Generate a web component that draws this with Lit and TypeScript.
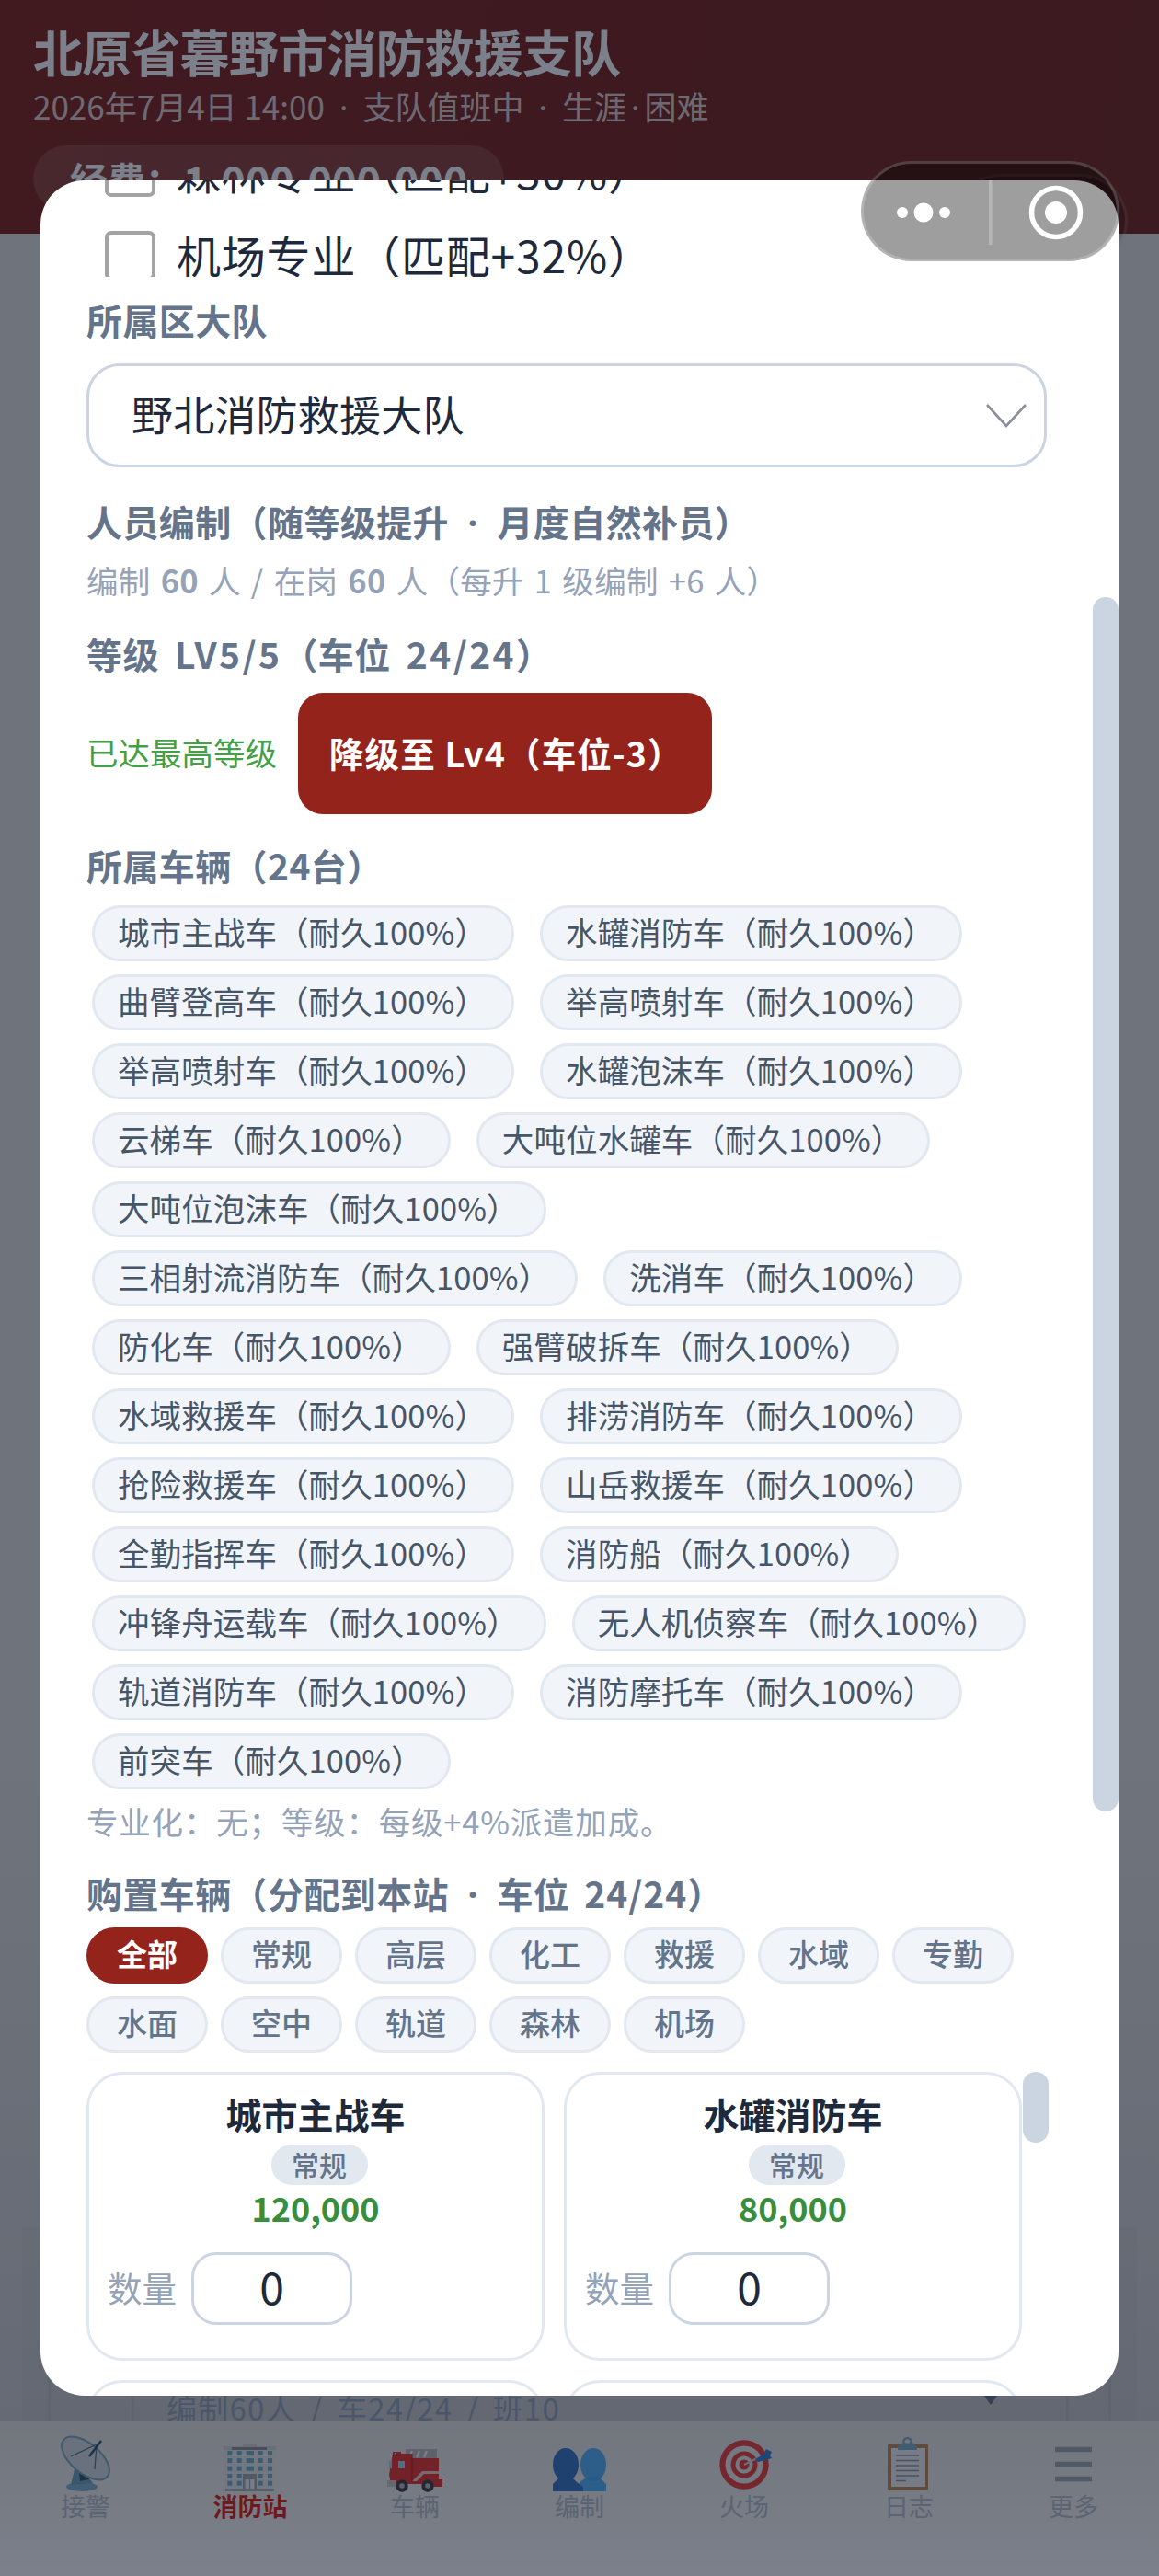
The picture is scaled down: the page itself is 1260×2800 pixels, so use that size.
import { LitElement, html, css, svg } from 'lit';
import { customElement } from 'lit/decorators.js';

const OWNED = [
  '城市主战车', '水罐消防车', '曲臂登高车', '举高喷射车', '举高喷射车', '水罐泡沫车',
  '云梯车', '大吨位水罐车', '大吨位泡沫车', '三相射流消防车', '洗消车', '防化车',
  '强臂破拆车', '水域救援车', '排涝消防车', '抢险救援车', '山岳救援车', '全勤指挥车',
  '消防船', '冲锋舟运载车', '无人机侦察车', '轨道消防车', '消防摩托车', '前突车',
];

const FILTERS = ['全部', '常规', '高层', '化工', '救援', '水域', '专勤', '水面', '空中', '轨道', '森林', '机场'];

const SHOP = [
  { name: '城市主战车', kind: '常规', price: '120,000' },
  { name: '水罐消防车', kind: '常规', price: '80,000' },
];

const WINDOW_ROWS = [16, 24, 32.7, 41, 48.7];
const WINDOW_COLS = [10.3, 20.7, 30.7, 43.7, 54];

const icons = {
  dish: svg`
    <ellipse cx="32" cy="55" rx="17" ry="5" fill="#7fb4cf"/>
    <path d="M24 36 L32 38 L30 48 L40 46 L44 51 L20 53 Z" fill="#6fa3bd"/>
    <path d="M29 40 L38 42 L40 47 L30 49 Z" fill="#2f5566"/>
    <ellipse cx="36" cy="24" rx="31" ry="16" transform="rotate(40 36 24)" fill="#d5dde2" stroke="#7fa8bd" stroke-width="2"/>
    <path d="M20 22 L48 9 L46 36" fill="none" stroke="#4d6f80" stroke-width="1.2"/>
    <path d="M40 22 L53 5" stroke="#2f5566" stroke-width="2.5"/>`,
  building: svg`
    <rect x="27" y="8" width="15" height="5" fill="#d2d2d2"/>
    <rect x="6" y="11" width="57" height="4" fill="#d8d8d8"/>
    <rect x="15" y="12" width="38" height="3" fill="#8d9196"/>
    <rect x="8" y="15" width="53" height="45" fill="#ececec"/>
    ${WINDOW_ROWS.map(y =>
      WINDOW_COLS.map(x => svg`<rect x=${x} y=${y} width=${x === 30.7 ? 8.3 : 5} height="5" fill="#6fb4c4"/>`))}
    <rect x="27" y="41" width="15" height="17" fill="#a5a8ab"/>
    <rect x="29.5" y="47" width="10" height="10" fill="#f5f5f5"/>
    <rect x="34" y="47" width="1.2" height="10" fill="#a5a8ab"/>
    <rect x="8" y="57" width="53" height="3" fill="#b4b4b4"/>`,
  truck: svg`
    <rect x="24" y="14" width="34" height="11" fill="#bdbdbd"/>
    <path d="M28 23 L31 16 M36 23 L39 16 M44 23 L47 16" stroke="#fff" stroke-width="2"/>
    <path d="M10 19 H31 V24 H60 V52 H8 L6 42 Z" fill="#ee3028"/>
    <rect x="10" y="17" width="9" height="3" fill="#ee3028"/>
    <rect x="12" y="18" width="2" height="1.5" fill="#fff"/>
    <rect x="16" y="27" width="7" height="8" fill="#9fd8f2"/>
    <rect x="6" y="27" width="3" height="8" fill="#9fd8f2"/>
    <path d="M31 19 V50" stroke="#b8201a" stroke-width="1"/>
    <path d="M31 49 L42 38 H60 V41 H44 L36 49 Z" fill="#fff" fill-opacity=".75"/>
    <rect x="50" y="47" width="14" height="8" fill="#ee3028"/>
    <rect x="4" y="48" width="9" height="7" fill="#c9c9c9"/>
    <circle cx="20" cy="54" r="6.7" fill="#3a3a3a"/><circle cx="20" cy="54" r="2.8" fill="#bbb"/>
    <circle cx="48" cy="54" r="6.7" fill="#3a3a3a"/><circle cx="48" cy="54" r="2.8" fill="#bbb"/>`,
  busts: svg`
    <ellipse cx="48" cy="31" rx="14" ry="18" fill="#3eacff" fill-opacity=".9"/>
    <path d="M42 44 H54 L62 52 V60 H33 V50 Z" fill="#3eacff" fill-opacity=".9"/>
    <ellipse cx="18" cy="31" rx="14" ry="18" fill="#3374c6"/>
    <path d="M12 44 H24 L30 50 L37 55 V60 H4 V52 Z" fill="#3374c6"/>`,
  target: svg`
    <circle cx="32" cy="31" r="26.7" fill="#f03a30"/>
    <circle cx="32" cy="31" r="20.5" fill="#f0f0f0"/>
    <circle cx="32" cy="31" r="14.5" fill="#f03a30"/>
    <circle cx="32" cy="31" r="9.5" fill="#f0f0f0"/>
    <circle cx="32" cy="31" r="5.5" fill="#f03a30"/>
    <path d="M32 31 L50 22" stroke="#d9d9d9" stroke-width="2"/>
    <path d="M44 25 L53 20 L56 14 L62 17 L60 21 L62 24 L55 26 L47 28 Z" fill="#2f82d8"/>`,
  clipboard: svg`
    <rect x="9" y="8" width="44" height="51" rx="2.5" fill="#c18857"/>
    <rect x="13" y="13" width="37" height="42" fill="#f4f4f4"/>
    <circle cx="30.5" cy="6" r="4" fill="none" stroke="#7fb0c8" stroke-width="2.4"/>
    <path d="M24 7.5 H37 L41 11 V15 H20 V11 Z" fill="#7fb0c8"/>
    <path d="M18 21 H43 M18 26.5 H43 M18 32 H43 M18 37.5 H43 M18 43 H43 M18 48.5 H29" stroke="#8e99a8" stroke-width="1.6"/>`,
  menu: svg`<path d="M10 14.5 H50 M10 30.5 H50 M10 46.5 H50" stroke="#9ea8b4" stroke-width="5.4"/>`,
};

const TABS = [
  { label: '接警', icon: icons.dish, vb: '3 0 66 60' },
  { label: '消防站', icon: icons.building, vb: '2 0 66 60', active: true },
  { label: '车辆', icon: icons.truck, vb: '1 0 66 60' },
  { label: '编制', icon: icons.busts, vb: '0 0 66 60' },
  { label: '火场', icon: icons.target, vb: '-1 0 66 60' },
  { label: '日志', icon: icons.clipboard, vb: '-1 0 66 60' },
  { label: '更多', icon: icons.menu, vb: '-3 0 66 60' },
];

@customElement('app-root')
export class AppRoot extends LitElement {
  static styles = css`
    :host {
      display: block;
      position: relative;
      width: 1260px;
      height: 2800px;
      overflow: hidden;
      font-family: "Noto Sans CJK SC", "Noto Sans", sans-serif;
      color: #1e293b;
    }
    * { box-sizing: border-box; }
    .page {
      display: flex;
      flex-direction: column;
      height: 100%;
      background: #e2dfda;
    }
    .dot { font-family: "Noto Sans", sans-serif; padding: 0 7px; }
    .dot.tight { padding: 0 5px; }
    .label .dot { padding: 0 10px; }
    .lat { letter-spacing: 2.4px; margin-left: 6px; }
    .lat.tight { letter-spacing: 1px; }

    /* page behind the sheet */
    .top {
      flex: none;
      height: 254px;
      padding: 22px 36px 0;
      color: #fff;
      background: linear-gradient(100deg, #7f1e14, #721d16);
    }
    .top h1 {
      margin: 0;
      font-size: 54px;
      line-height: 68px;
      font-weight: 700;
      letter-spacing: -0.8px;
    }
    .top .sub {
      font-size: 35px;
      line-height: 50px;
      color: rgba(255, 255, 255, 0.8);
    }
    .funds {
      display: inline-flex;
      align-items: center;
      height: 72px;
      margin-top: 16px;
      padding: 0 40px;
      border-radius: 36px;
      background: rgba(255, 255, 255, 0.13);
      font-size: 41px;
      font-weight: 700;
    }
    .funds span { font-size: 45px; }
    .body {
      flex: 1;
      min-height: 0;
      overflow: hidden;
      display: flex;
      flex-direction: column;
      justify-content: flex-end;
      padding: 0 24px;
      background: linear-gradient(#e4e2df 70%, #cfcfcf);
    }
    .panel {
      height: 220px;
      margin-bottom: -9px;
      padding: 0 28px;
      background: rgba(0, 0, 0, 0.015);
    }
    .panel-card {
      display: flex;
      justify-content: flex-end;
      height: 100%;
      padding-right: 43px;
      border: solid rgba(0, 0, 0, 0.05);
      border-width: 0 3px;
    }
    .panel-select {
      display: flex;
      align-items: flex-end;
      justify-content: space-between;
      width: 1019px;
      padding: 0 72px 0 35px;
      border: solid rgba(0, 0, 0, 0.05);
      border-width: 0 3px;
      font-size: 33px;
      line-height: 48px;
      letter-spacing: 1.2px;
      word-spacing: 6px;
      color: #94a3b8;
    }
    .panel-select svg { margin-bottom: 27px; }
    .tabs {
      flex: none;
      display: flex;
      height: 168px;
      padding: 0 3.5px;
      background: linear-gradient(#ebe8e3, #fff);
      position: relative;
    }
    .tab {
      flex: 1;
      display: flex;
      flex-direction: column;
      align-items: center;
      padding-top: 16px;
      font-size: 27px;
      line-height: 32px;
      color: #b8c0ca;
    }
    .tab svg { display: block; overflow: visible; }
    .tab.active { color: #e21e0d; font-weight: 700; }

    /* sheet */
    .overlay {
      position: absolute;
      inset: 0;
      display: flex;
      align-items: center;
      justify-content: center;
      background: rgba(15, 23, 42, 0.55);
    }
    .sheet {
      position: relative;
      width: 1172px;
      height: 2408px;
      padding: 0 78px 0 50px;
      overflow: hidden;
      border-radius: 48px;
      background: #fff;
    }
    .thumb {
      position: absolute;
      width: 28px;
      border-radius: 14px;
      background: #cbd5e1;
    }
    .sheet > .thumb { right: 0; top: 453px; height: 1320px; }

    .specs {
      height: 105px;
      overflow: hidden;
    }
    .spec {
      display: flex;
      align-items: center;
      gap: 23px;
      height: 91px;
      padding-left: 20px;
      font-size: 48px;
      letter-spacing: 0.8px;
    }
    .spec:first-child { margin-top: -55px; }
    .spec span { padding-bottom: 4px; }
    .box {
      flex: none;
      width: 55px;
      height: 54px;
      border: 4px solid #a3a3a3;
      border-radius: 7px;
      background: #fff;
    }

    .label {
      height: 54px;
      font-size: 39px;
      line-height: 48px;
      font-weight: 700;
      letter-spacing: 0.4px;
      color: #64748b;
    }
    .note {
      height: 48px;
      font-size: 34.5px;
      line-height: 44px;
      letter-spacing: 0.3px;
      word-spacing: 3px;
      color: #94a3b8;
    }
    .note.wide { letter-spacing: 0.8px; }
    .note b { font-weight: 700; }
    .select {
      display: flex;
      align-items: center;
      justify-content: space-between;
      height: 113px;
      margin-top: 18px;
      padding: 0 19px 0 46px;
      border: 3px solid #cbd5e1;
      border-radius: 36px;
      font-size: 45px;
      letter-spacing: 0.2px;
    }
    .select span { padding-bottom: 4px; }
    .level {
      display: flex;
      align-items: center;
      gap: 23px;
      margin-top: 13px;
    }
    .level span {
      padding-bottom: 5px;
      font-size: 34.5px;
      color: #43a047;
    }
    .down {
      display: flex;
      align-items: center;
      height: 132px;
      width: 450px;
      padding: 0 0 3px 34px;
      border-radius: 27px;
      background: #94231c;
      color: #fff;
      font-size: 37.5px;
      font-weight: 700;
      letter-spacing: 1.1px;
      white-space: nowrap;
    }

    .chips {
      display: flex;
      flex-wrap: wrap;
      gap: 14px 28px;
      margin-top: 14px;
      padding-left: 6px;
    }
    .chip {
      height: 61px;
      padding: 0 27px 0 25px;
      border: 3px solid #e2e8f0;
      border-radius: 31px;
      background: #f1f5f9;
      font-size: 34.5px;
      line-height: 51px;
      letter-spacing: 0.1px;
      color: #475569;
      white-space: nowrap;
    }
    .filters {
      display: flex;
      flex-wrap: wrap;
      gap: 14px;
      margin-top: 8px;
    }
    .filter {
      width: 132px;
      height: 61px;
      border: 3px solid #e2e8f0;
      border-radius: 31px;
      background: #f1f5f9;
      font-size: 33px;
      font-weight: 500;
      line-height: 51px;
      text-align: center;
      color: #64748b;
    }
    .filter.on {
      border-color: #94231c;
      background: #94231c;
      color: #fff;
      font-weight: 700;
    }

    .shop {
      position: relative;
      display: grid;
      grid-template-columns: 498px 498px;
      gap: 21px;
      margin-top: 21px;
    }
    .shop .thumb { left: 1018px; top: 0; height: 77px; }
    .card {
      height: 314px;
      padding-top: 18px;
      border: 3px solid #e2e8f0;
      border-radius: 39px;
      text-align: center;
    }
    .card h3 {
      height: 54px;
      margin: 0;
      font-size: 39px;
      line-height: 48px;
      font-weight: 700;
    }
    .kind {
      display: inline-block;
      height: 44px;
      margin: 4px 0 0 8px;
      padding: 0 22.5px;
      border-radius: 22px;
      background: #e2e8f0;
      font-size: 30px;
      line-height: 42px;
      font-weight: 500;
      color: #64748b;
      vertical-align: top;
    }
    .price {
      height: 48px;
      margin-top: 3px;
      font-size: 36px;
      line-height: 43px;
      font-weight: 700;
      color: #388e3c;
    }
    .qty {
      display: flex;
      align-items: center;
      gap: 16px;
      margin-top: 22px;
      padding-left: 20px;
      font-size: 37.5px;
      color: #94a3b8;
    }
    .qty span { padding-bottom: 5px; }
    .qty div {
      width: 175px;
      height: 79px;
      border: 3px solid #cbd5e1;
      border-radius: 27px;
      font-size: 48px;
      line-height: 66px;
      color: #1e293b;
    }

    /* mini program capsule */
    .capsule, .ghost {
      position: absolute;
      border-radius: 55px;
    }
    .ghost {
      left: 1036px;
      top: 189px;
      width: 190px;
      height: 102px;
      border: 3px solid rgba(255, 255, 255, 0.07);
      background: rgba(0, 0, 0, 0.12);
    }
    .capsule {
      left: 936px;
      top: 175px;
      width: 281px;
      height: 109px;
      display: flex;
      align-items: center;
      border: 3px solid rgba(255, 255, 255, 0.2);
      background: rgba(0, 0, 0, 0.38);
    }
    .capsule svg { position: absolute; left: -3px; top: -3px; }
  `;

  render() {
    return html`
      <div class="page">
        <header class="top">
          <h1>北原省暮野市消防救援支队</h1>
          <div class="sub">2026年7月4日 14:00<span class="dot"> · </span>支队值班中<span class="dot"> · </span>生涯<span class="dot tight">·</span>困难</div>
          <div class="funds">经费：<span>1,000,000,000</span></div>
        </header>
        <main class="body">
          <div class="panel">
            <div class="panel-card">
              <div class="panel-select">
                <span>编制60人 / 车24/24 / 班10</span>
                <svg width="20" height="14" viewBox="0 0 20 14"><path d="M0 0 H20 L10 14 Z" fill="#64748b"/></svg>
              </div>
            </div>
          </div>
        </main>
        <nav class="tabs">
          ${TABS.map(t => html`
            <div class="tab ${t.active ? 'active' : ''}">
              <svg width="66" height="60" viewBox=${t.vb}>${t.icon}</svg>
              <span>${t.label}</span>
            </div>`)}
        </nav>
      </div>

      <div class="overlay">
        <i class="ghost"></i>
        <section class="sheet">
          <div class="specs">
            <div class="spec"><i class="box"></i><span>森林专业（匹配+30%）</span></div>
            <div class="spec"><i class="box"></i><span>机场专业（匹配+32%）</span></div>
          </div>

          <div class="label" style="margin-top:22px">所属区大队</div>
          <div class="select">
            <span>野北消防救援大队</span>
            <svg width="44" height="26" viewBox="0 0 44 26"><path d="M1 1 L22 24 L43 1" fill="none" stroke="#8a9099" stroke-width="2.6"/></svg>
          </div>

          <div class="label" style="margin-top:34px">人员编制（随等级提升<span class="dot"> · </span>月度自然补员）</div>
          <div class="note" style="margin-top:12px">编制 <b>60</b> 人 / 在岗 <b>60</b> 人（每升 1 级编制 +6 人）</div>

          <div class="label" style="margin-top:30px">等级<span class="lat"> LV5/5</span>（车位<span class="lat"> 24/24</span>）</div>
          <div class="level">
            <span>已达最高等级</span>
            <div class="down">降级至 Lv4（车位-3）</div>
          </div>

          <div class="label" style="margin-top:31px">所属车辆（24台）</div>
          <div class="chips">
            ${OWNED.map(n => html`<div class="chip">${n}（耐久100%）</div>`)}
          </div>
          <div class="note wide" style="margin-top:12px">专业化：无；等级：每级+4%派遣加成。</div>

          <div class="label" style="margin-top:28px">购置车辆（分配到本站<span class="dot"> · </span>车位<span class="lat tight"> 24/24</span>）</div>
          <div class="filters">
            ${FILTERS.map((f, i) => html`<div class="filter ${i === 0 ? 'on' : ''}">${f}</div>`)}
          </div>

          <div class="shop">
            ${SHOP.map(c => html`
              <div class="card">
                <h3>${c.name}</h3>
                <span class="kind">${c.kind}</span>
                <div class="price">${c.price}</div>
                <div class="qty"><span>数量</span><div>0</div></div>
              </div>`)}
            <div class="card"></div>
            <div class="card"></div>
            <i class="thumb"></i>
          </div>

          <i class="thumb"></i>
        </section>
      </div>

      <div class="capsule">
        <svg width="281" height="109" viewBox="0 0 281 109">
          <ellipse cx="45" cy="56" rx="6" ry="6" fill="#fff"/>
          <ellipse cx="68" cy="56" rx="10.5" ry="10.5" fill="#fff"/>
          <ellipse cx="91" cy="56" rx="6" ry="6" fill="#fff"/>
          <rect x="139" y="21" width="3.5" height="70" fill="rgba(255,255,255,.25)"/>
          <circle cx="212" cy="56" r="26.5" fill="none" stroke="#fff" stroke-width="5.5"/>
          <circle cx="212" cy="56" r="12" fill="#fff"/>
        </svg>
      </div>
    `;
  }
}
